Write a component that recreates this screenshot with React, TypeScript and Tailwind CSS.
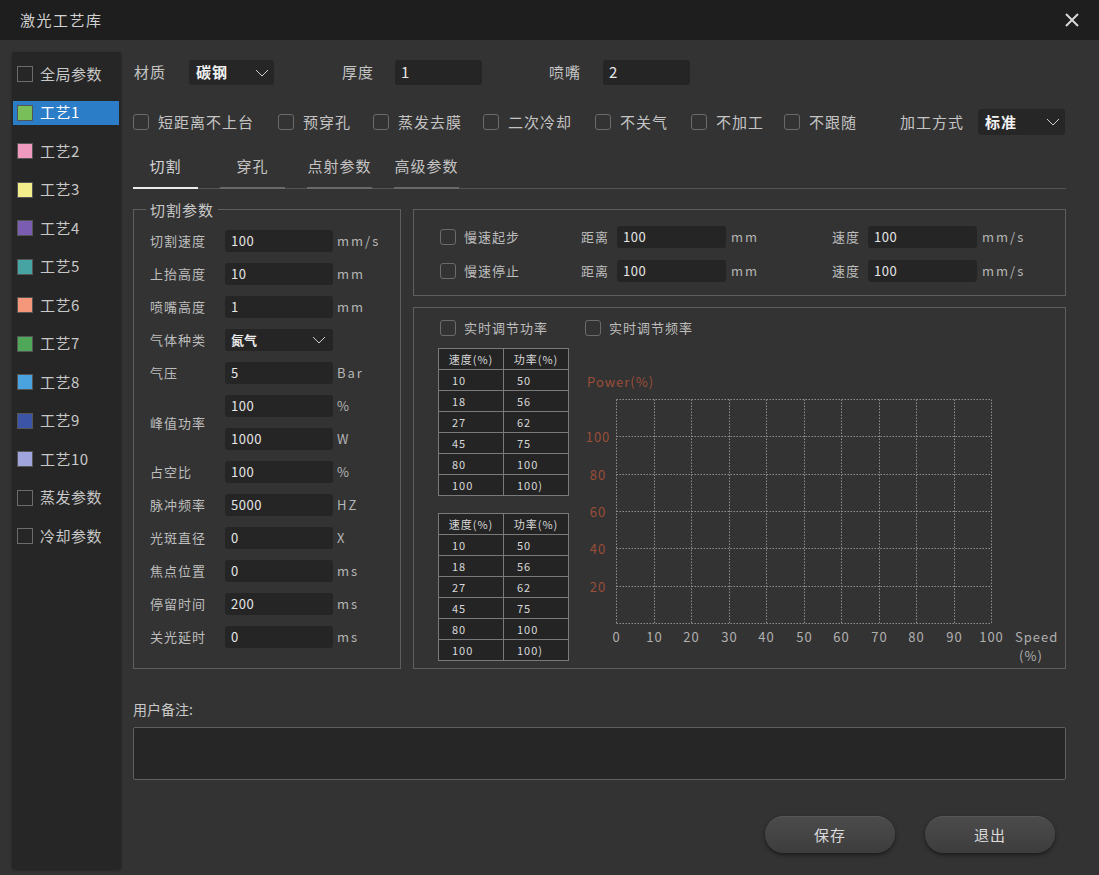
import React from "react";

const font = { fontFamily: '"Noto Sans CJK SC", "Noto Sans", sans-serif' };

interface Craft {
  name: string;
  swatch: string | null;
  selected?: boolean;
}

const crafts: Craft[] = [
  { name: "全局参数", swatch: null },
  { name: "工艺1", swatch: "bg-[#78bf5a]", selected: true },
  { name: "工艺2", swatch: "bg-[#f09ac0]" },
  { name: "工艺3", swatch: "bg-[#f3ee8c]" },
  { name: "工艺4", swatch: "bg-[#7a5db0]" },
  { name: "工艺5", swatch: "bg-[#46a4a3]" },
  { name: "工艺6", swatch: "bg-[#f4977a]" },
  { name: "工艺7", swatch: "bg-[#4fa75a]" },
  { name: "工艺8", swatch: "bg-[#4aa2de]" },
  { name: "工艺9", swatch: "bg-[#3b54a6]" },
  { name: "工艺10", swatch: "bg-[#a0a5de]" },
  { name: "蒸发参数", swatch: null },
  { name: "冷却参数", swatch: null },
];

const options = [
  { label: "短距离不上台", w: "w-[145px]" },
  { label: "预穿孔", w: "w-[95px]" },
  { label: "蒸发去膜", w: "w-[110px]" },
  { label: "二次冷却", w: "w-[112px]" },
  { label: "不关气", w: "w-[96px]" },
  { label: "不加工", w: "w-[93px]" },
  { label: "不跟随", w: "w-[116px]" },
];

const tabs = ["切割", "穿孔", "点射参数", "高级参数"];

const tableRows = [
  ["10", "50"],
  ["18", "56"],
  ["27", "62"],
  ["45", "75"],
  ["80", "100"],
  ["100", "100)"],
];

const Check: React.FC<{ round?: boolean }> = ({ round }) => (
  <span
    className={`inline-block w-[16px] h-[16px] shrink-0 border border-[#6b6b6b] ${
      round ? "rounded-[3px]" : ""
    }`}
  />
);

const Chevron: React.FC = () => (
  <svg width="14" height="8" viewBox="0 0 14 8" className="shrink-0">
    <polyline points="1,1 7,7 13,1" fill="none" stroke="#cfcfcf" strokeWidth="1" />
  </svg>
);

const Field: React.FC<{ value: string; w: string }> = ({ value, w }) => (
  <div
    className={`${w} h-[22px] bg-[#252525] rounded-[3px] flex items-center pl-[6px] text-[13px] text-[#e6e6e6] tracking-[0.5px]`}
  >
    {value}
  </div>
);

const ParamRow: React.FC<{ label: string; value: string; unit: string }> = ({
  label,
  value,
  unit,
}) => (
  <div className="flex items-center h-[22px]">
    <span className="w-[75px] text-[13px] tracking-[1px] text-[#bdbdbd]">{label}</span>
    <Field value={value} w="w-[108px]" />
    <span className="ml-[4px] text-[13px] tracking-[2px] text-[#b5b5b5]">{unit}</span>
  </div>
);

const SpeedTable: React.FC = () => (
  <table className="border-collapse border border-[#7a7a7a] text-[11px] tracking-[1px] text-[#d8d8d8] bg-[#242424]">
    <thead>
      <tr className="h-[21px]">
        <th className="w-[65px] border border-[#7a7a7a] font-normal text-center">速度(%)</th>
        <th className="w-[65px] border border-[#7a7a7a] font-normal text-center">功率(%)</th>
      </tr>
    </thead>
    <tbody>
      {tableRows.map((r, i) => (
        <tr key={i} className="h-[21px]">
          <td className="border border-[#7a7a7a] pl-[13px]">{r[0]}</td>
          <td className="border border-[#7a7a7a] pl-[13px]">{r[1]}</td>
        </tr>
      ))}
    </tbody>
  </table>
);

const Chart: React.FC = () => {
  const x0 = 40;
  const y0 = 51;
  const cw = 37.5;
  const rh = 37.33;
  const cols = Array.from({ length: 11 }, (_, i) => Math.round(x0 + i * cw) - 0.5);
  const rows = Array.from({ length: 7 }, (_, i) => Math.round(y0 + i * rh) + 0.5);
  const yLabels = ["100", "80", "60", "40", "20"];
  return (
    <svg width="484" height="316" className="ml-[8px]" style={font}>
      <text x="10" y="39" fontSize="13" fill="#9c4e39" letterSpacing="1">
        Power(%)
      </text>
      {cols.map((x, i) => (
        <line key={`c${i}`} x1={x} y1={rows[0]} x2={x} y2={rows[6]} stroke="#8e8e8e" strokeDasharray="1.5 1.5" />
      ))}
      {rows.map((y, i) => (
        <line key={`r${i}`} x1={cols[0]} y1={y} x2={cols[10]} y2={y} stroke="#8e8e8e" strokeDasharray="1.5 1.5" />
      ))}
      {yLabels.map((l, i) => (
        <text key={l} x="21" y={rows[i + 1] + 5} fontSize="13" fill="#9c4e39" textAnchor="middle" letterSpacing="1">
          {l}
        </text>
      ))}
      {cols.map((x, i) => (
        <text key={`x${i}`} x={x} y="294" fontSize="13" fill="#b0b0b0" textAnchor="middle" letterSpacing="1">
          {i * 10}
        </text>
      ))}
      <text x="438" y="294" fontSize="13" fill="#b0b0b0" letterSpacing="1">
        Speed
      </text>
      <text x="454" y="313" fontSize="13" fill="#b0b0b0" textAnchor="middle" letterSpacing="1">
        (%)
      </text>
    </svg>
  );
};

const App: React.FC = () => {
  return (
    <div className="w-[1099px] h-[875px] bg-[#333333] flex flex-col overflow-hidden" style={font}>
      {/* title bar */}
      <div className="h-[40px] bg-[#1e1e1e] flex items-center justify-between pl-[20px] pr-[19px]">
        <span className="text-[15px] tracking-[1.5px] text-[#d2d2d2]">激光工艺库</span>
        <svg width="16" height="16" viewBox="0 0 16 16">
          <path d="M2 2 L14 14 M14 2 L2 14" stroke="#d8d8d8" strokeWidth="2" />
        </svg>
      </div>

      <div className="flex flex-1 pt-[12px] pl-[12px]">
        {/* sidebar */}
        <div className="w-[109px] h-[817px] bg-[#262626] rounded-[3px] shadow-[0_1px_3px_rgba(0,0,0,0.4)] flex flex-col gap-[14.5px] pt-[10px] pl-[1px] pr-[2px]">
          {crafts.map((c) => (
            <div
              key={c.name}
              className={`h-[24px] flex items-center gap-[7px] pl-[4px] ${
                c.selected ? "bg-[#2c7dc8] text-white" : "text-[#c8c8c8]"
              }`}
            >
              {c.swatch ? (
                <span className={`w-[16px] h-[16px] border border-[#555] ${c.swatch}`} />
              ) : (
                <Check />
              )}
              <span className="text-[15px] tracking-[0.5px]">{c.name}</span>
            </div>
          ))}
        </div>

        {/* main */}
        <div className="w-[933px] ml-[12px] pt-[8px] flex flex-col">
          <div className="h-[25px] flex items-center text-[15px] tracking-[1px] text-[#c4c4c4]">
            <span className="w-[56px] pl-[1px]">材质</span>
            <div className="w-[85px] h-[25px] bg-[#262626] rounded-[3px] flex items-center justify-between pl-[7px] pr-[5px]">
              <span className="font-bold text-[#f2f2f2]">碳钢</span>
              <Chevron />
            </div>
            <span className="ml-[68px] w-[53px]">厚度</span>
            <Field value="1" w="w-[87px] h-[25px] text-[15px]" />
            <span className="ml-[67px] w-[54px]">喷嘴</span>
            <Field value="2" w="w-[87px] h-[25px] text-[15px]" />
          </div>

          <div className="mt-[24px] h-[26px] flex items-center text-[15px] tracking-[1px] text-[#c4c4c4]">
            {options.map((o) => (
              <div key={o.label} className={`${o.w} flex items-center gap-[9px]`}>
                <Check round />
                <span>{o.label}</span>
              </div>
            ))}
            <span className="w-[78px]">加工方式</span>
            <div className="w-[87px] h-[26px] bg-[#262626] rounded-[3px] flex items-center justify-between pl-[7px] pr-[5px]">
              <span className="font-bold text-[#f2f2f2]">标准</span>
              <Chevron />
            </div>
          </div>

          {/* tabs */}
          <div className="mt-[15px] h-[39px] flex items-end gap-[22px] border-b border-[#555555]">
            {tabs.map((t, i) => (
              <div
                key={t}
                className={`w-[65px] h-[38px] -mb-px flex justify-center pt-[4px] text-[15px] tracking-[1px] border-b-2 ${
                  i === 0 ? "border-[#ececec] text-[#d6d6d6]" : "border-[#686868] text-[#c4c4c4]"
                }`}
              >
                <span className="whitespace-nowrap">{t}</span>
              </div>
            ))}
          </div>

          {/* content */}
          <div className="mt-[20px] flex items-start gap-[12px]">
            <div className="w-[268px] h-[460px] border border-[#5e5e5e] flex flex-col px-[16px]">
              <span className="-mt-[10px] -ml-[4px] h-[20px] px-[4px] bg-[#333333] self-start text-[15px] tracking-[1px] text-[#c8c8c8] leading-[20px]">
                切割参数
              </span>
              <div className="mt-[10px] flex flex-col gap-[11px]">
                <ParamRow label="切割速度" value="100" unit="mm/s" />
                <ParamRow label="上抬高度" value="10" unit="mm" />
                <ParamRow label="喷嘴高度" value="1" unit="mm" />
                <div className="flex items-center h-[22px]">
                  <span className="w-[75px] text-[13px] tracking-[1px] text-[#bdbdbd]">气体种类</span>
                  <div className="w-[108px] h-[22px] bg-[#252525] rounded-[3px] flex items-center justify-between pl-[6px] pr-[7px]">
                    <span className="text-[13px] font-bold text-[#ececec]">氮气</span>
                    <Chevron />
                  </div>
                </div>
                <ParamRow label="气压" value="5" unit="Bar" />
                <div className="flex items-center">
                  <span className="w-[75px] text-[13px] tracking-[1px] text-[#bdbdbd]">峰值功率</span>
                  <div className="flex flex-col gap-[11px]">
                    <div className="flex items-center h-[22px]">
                      <Field value="100" w="w-[108px]" />
                      <span className="ml-[4px] text-[13px] tracking-[2px] text-[#b5b5b5]">%</span>
                    </div>
                    <div className="flex items-center h-[22px]">
                      <Field value="1000" w="w-[108px]" />
                      <span className="ml-[4px] text-[13px] tracking-[2px] text-[#b5b5b5]">W</span>
                    </div>
                  </div>
                </div>
                <ParamRow label="占空比" value="100" unit="%" />
                <ParamRow label="脉冲频率" value="5000" unit="HZ" />
                <ParamRow label="光斑直径" value="0" unit="X" />
                <ParamRow label="焦点位置" value="0" unit="ms" />
                <ParamRow label="停留时间" value="200" unit="ms" />
                <ParamRow label="关光延时" value="0" unit="ms" />
              </div>
            </div>

            <div className="w-[653px] flex flex-col gap-[11px]">
              <div className="h-[87px] border border-[#5e5e5e] pt-[16px] pl-[26px] flex flex-col gap-[12px]">
                {["慢速起步", "慢速停止"].map((l) => (
                  <div key={l} className="h-[22px] flex items-center text-[13px] tracking-[1px] text-[#bdbdbd]">
                    <div className="w-[141px] flex items-center gap-[8px]">
                      <Check round />
                      <span>{l}</span>
                    </div>
                    <span className="w-[36px]">距离</span>
                    <Field value="100" w="w-[109px]" />
                    <span className="ml-[5px] w-[101px] tracking-[2px] text-[#b5b5b5]">mm</span>
                    <span className="w-[36px]">速度</span>
                    <Field value="100" w="w-[109px]" />
                    <span className="ml-[5px] tracking-[2px] text-[#b5b5b5]">mm/s</span>
                  </div>
                ))}
              </div>

              <div className="h-[362px] border border-[#5e5e5e] pt-[12px] pl-[24px] flex flex-col">
                <div className="h-[16px] flex items-center text-[13px] tracking-[1px] text-[#bdbdbd] pl-[2px]">
                  <div className="w-[145px] flex items-center gap-[8px]">
                    <Check round />
                    <span>实时调节功率</span>
                  </div>
                  <div className="flex items-center gap-[8px]">
                    <Check round />
                    <span>实时调节频率</span>
                  </div>
                </div>
                <div className="mt-[12px] flex items-start">
                  <div className="flex flex-col gap-[17px]">
                    <SpeedTable />
                    <SpeedTable />
                  </div>
                  <Chart />
                </div>
              </div>
            </div>
          </div>

          {/* notes */}
          <span className="mt-[30px] h-[20px] leading-[20px] text-[14px] text-[#c8c8c8]">用户备注:</span>
          <div className="mt-[8px] h-[53px] bg-[#262626] border border-[#5f5f5f] rounded-[2px]" />

          <div className="mt-[36px] flex justify-end gap-[30px] pr-[11px]">
            {["保存", "退出"].map((b) => (
              <button
                key={b}
                className="w-[130px] h-[37px] rounded-full bg-gradient-to-b from-[#4b4b4b] to-[#3d3d3d] border-t border-[#585858] shadow-[0_2px_4px_rgba(0,0,0,0.5)] text-[15px] tracking-[1px] text-[#dcdcdc]"
              >
                {b}
              </button>
            ))}
          </div>
        </div>
      </div>
    </div>
  );
};

export default App;
